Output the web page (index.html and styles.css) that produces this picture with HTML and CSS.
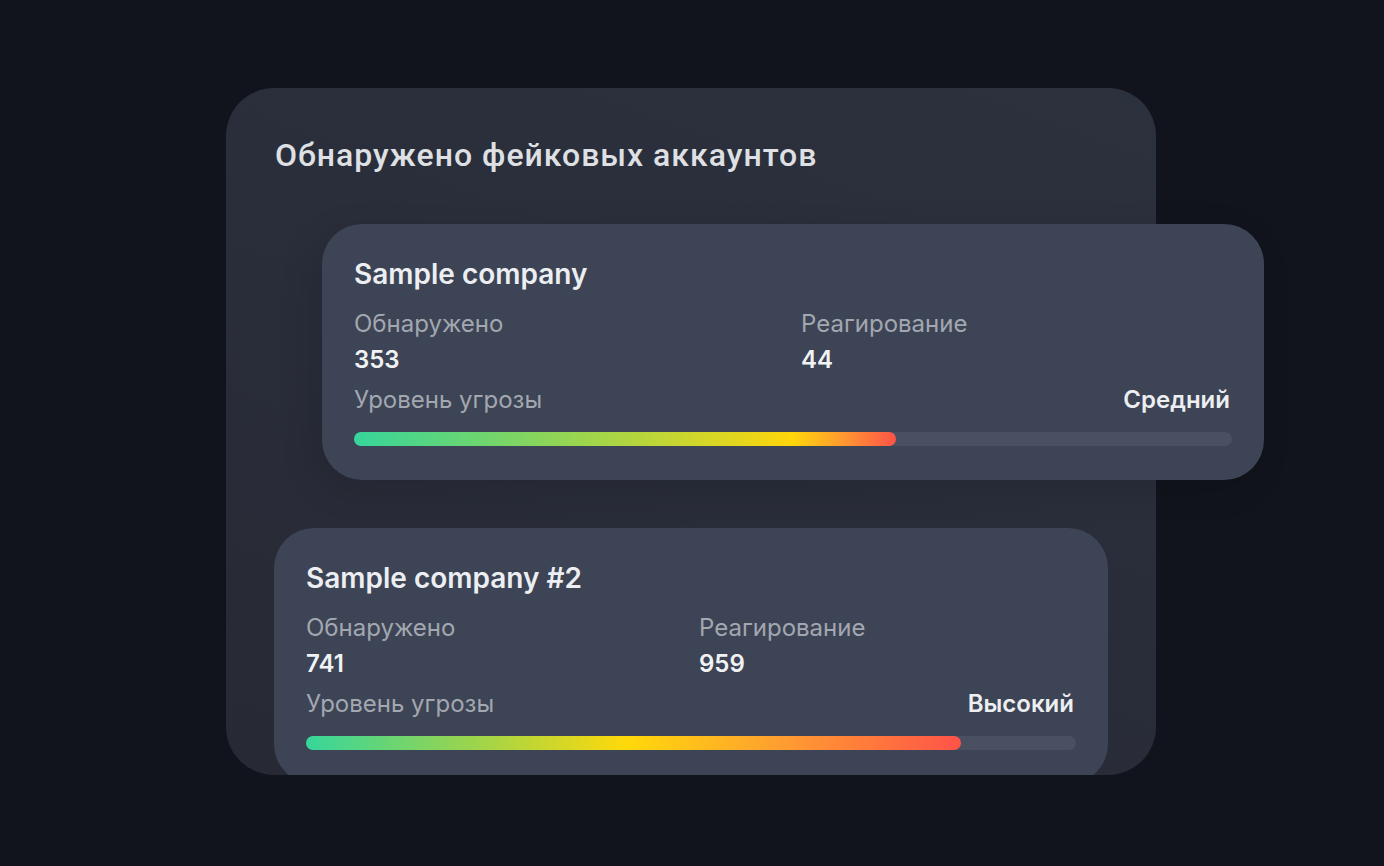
FILE: index.html
```html
<!DOCTYPE html>
<html lang="ru">
<head>
<meta charset="utf-8">
<title>Обнаружено фейковых аккаунтов</title>
<link rel="stylesheet" href="styles.css">
</head>
<body>
<main class="stage">
  <section class="panel">
    <h1 class="panel-title">Обнаружено фейковых аккаунтов</h1>
    <article class="company company-raised">
      <h2 class="company-name">Sample company</h2>
      <div class="stats">
        <div class="stat">
          <div class="stat-label">Обнаружено</div>
          <div class="stat-value">353</div>
        </div>
        <div class="stat">
          <div class="stat-label">Реагирование</div>
          <div class="stat-value">44</div>
        </div>
      </div>
      <div class="threat">
        <span class="threat-label">Уровень угрозы</span>
        <span class="threat-level">Средний</span>
      </div>
      <div class="track"><div class="fill fill-medium" style="width:61.7%"></div></div>
    </article>
    <div class="clip">
      <article class="company">
        <h2 class="company-name">Sample company #2</h2>
        <div class="stats">
          <div class="stat">
            <div class="stat-label">Обнаружено</div>
            <div class="stat-value">741</div>
          </div>
          <div class="stat">
            <div class="stat-label">Реагирование</div>
            <div class="stat-value">959</div>
          </div>
        </div>
        <div class="threat">
          <span class="threat-label">Уровень угрозы</span>
          <span class="threat-level">Высокий</span>
        </div>
        <div class="track"><div class="fill fill-high" style="width:85%"></div></div>
      </article>
    </div>
  </section>
</main>
</body>
</html>
```

FILE: styles.css
```css
* { box-sizing: border-box; }
html, body { margin: 0; padding: 0; }
body {
  background: #11141c;
  width: 1384px;
  height: 866px;
  overflow: hidden;
  font-family: Inter, "Noto Sans", sans-serif;
}
.stage {
  padding: 88px 0 0 226px;
}
.panel {
  width: 930px;
  height: 687px;
  border-radius: 48px;
  background: linear-gradient(200deg, #2c313e 0%, #292d39 55%, #272a34 100%);
  padding: 46px 48px 0 48px;
  display: flex;
  flex-direction: column;
}
.panel-title {
  margin: 0 0 0 1px;
  font-family: Roboto, "Noto Sans", sans-serif;
  font-weight: 500;
  font-size: 32px;
  line-height: 42px;
  color: #dfe0e3;
  letter-spacing: 1px;
}
.company {
  background: #3d4455;
  border-radius: 40px;
  padding: 32px 32px 34px 32px;
  height: 256px;
}
.company-raised {
  margin: 48px -156px 48px 48px;
  box-shadow: -8px 10px 36px rgba(10, 12, 18, 0.12);
}
.clip {
  flex: 1;
  min-height: 0;
  overflow: hidden;
}
.company-name {
  margin: 0;
  font-size: 28px;
  line-height: 36px;
  font-weight: 600;
  color: #eceef1;
}
.stats {
  margin-top: 18px;
  display: grid;
  grid-template-columns: 1fr 1fr;
  gap: 16px;
}
.stat-label {
  font-size: 24px;
  line-height: 28px;
  color: #a3a7b0;
}
.stat-value {
  margin-top: 8px;
  font-size: 24px;
  line-height: 28px;
  font-weight: 600;
  color: #f1f2f4;
}
.threat {
  margin-top: 12px;
  display: flex;
  justify-content: space-between;
  align-items: center;
  line-height: 28px;
}
.threat-label {
  font-size: 24px;
  color: #a3a7b0;
}
.threat-level {
  font-size: 24px;
  font-weight: 600;
  color: #eceef1;
  margin-right: 2px;
}
.track {
  margin-top: 18px;
  height: 14px;
  border-radius: 7px;
  background: #4a5061;
}
.fill {
  height: 100%;
  border-radius: 7px;
}
.fill-medium {
  background: linear-gradient(90deg, #36d69b 0%, #8ad55a 35%, #d5d628 65%, #ffd60a 81%, #ff9a30 90%, #ff5348 100%);
}
.fill-high {
  background: linear-gradient(90deg, #36d69b 0%, #9ad44e 25%, #ffd90a 49%, #ff9f30 72%, #ff5348 100%);
}
```
